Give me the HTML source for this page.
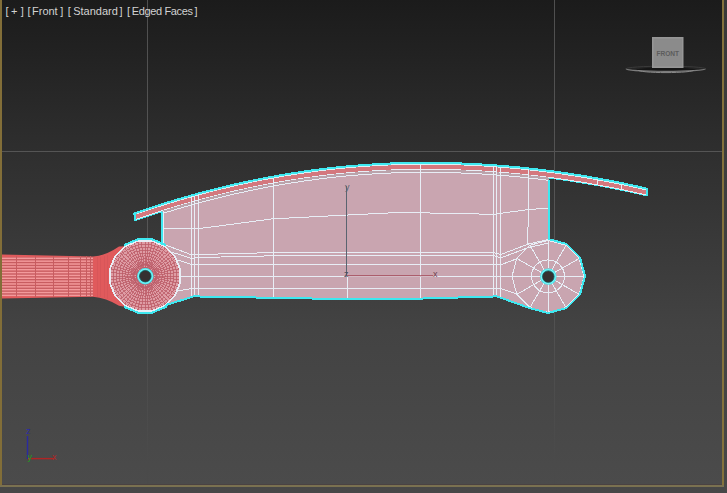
<!DOCTYPE html>
<html><head><meta charset="utf-8">
<style>
html,body{margin:0;padding:0;}
body{width:727px;height:493px;overflow:hidden;background:#3d3d3d;position:relative;font-family:"Liberation Sans",sans-serif;}
svg{position:absolute;left:0;top:0;}
.t{position:absolute;top:3.5px;color:#d2d2d2;font-size:11px;line-height:14px;white-space:pre;}
</style></head><body>
<svg width="727" height="493" viewBox="0 0 727 493">
<defs>
<linearGradient id="bg" x1="0" y1="0" x2="0" y2="1">
<stop offset="0" stop-color="#1b1b1b"/>
<stop offset="0.3" stop-color="#2e2e2e"/>
<stop offset="0.68" stop-color="#434343"/>
<stop offset="1" stop-color="#4b4b4b"/>
</linearGradient>
<linearGradient id="obg" x1="0" y1="0" x2="0" y2="1">
<stop offset="0" stop-color="#383838"/>
<stop offset="1" stop-color="#474747"/>
</linearGradient>
<linearGradient id="grid" x1="0" y1="0" x2="0" y2="1">
<stop offset="0" stop-color="#4f4f4f"/>
<stop offset="0.5" stop-color="#565656"/>
<stop offset="0.8" stop-color="#4d4d4d"/>
<stop offset="0.95" stop-color="#4a4a4a"/>
</linearGradient>
</defs>
<rect x="0" y="0" width="727" height="493" fill="url(#obg)"/>
<rect x="2" y="0" width="720" height="485" fill="url(#bg)"/>
<g shape-rendering="crispEdges">
<rect x="147" y="0" width="1" height="485" fill="url(#grid)"/>
<rect x="554" y="0" width="1" height="485" fill="url(#grid)"/>
<rect x="2" y="151" width="720" height="1" fill="#555555"/>
</g>
<g shape-rendering="crispEdges">
<path d="M2,254.4 L93,256.6 Q106,255.5 119,246.5 L132,246 L132,308 L119,305.8 Q106,297.6 93,296.7 L2,298.5 Z" fill="#e05a5c" shape-rendering="geometricPrecision"/>
<polygon points="2.00,256.50 93.00,257.50 93.00,296.00 2.00,296.50" fill="#c85c60"/>
<rect x="2" y="257.60" width="91" height="1.45" fill="#f39a9c" shape-rendering="geometricPrecision"/>
<rect x="2" y="260.45" width="91" height="1.45" fill="#f39a9c" shape-rendering="geometricPrecision"/>
<rect x="2" y="263.30" width="91" height="1.45" fill="#f39a9c" shape-rendering="geometricPrecision"/>
<rect x="2" y="266.15" width="91" height="1.45" fill="#f39a9c" shape-rendering="geometricPrecision"/>
<rect x="2" y="269.00" width="91" height="1.45" fill="#f39a9c" shape-rendering="geometricPrecision"/>
<rect x="2" y="271.85" width="91" height="1.45" fill="#f39a9c" shape-rendering="geometricPrecision"/>
<rect x="2" y="274.70" width="91" height="1.45" fill="#f39a9c" shape-rendering="geometricPrecision"/>
<rect x="2" y="277.55" width="91" height="1.45" fill="#f39a9c" shape-rendering="geometricPrecision"/>
<rect x="2" y="280.40" width="91" height="1.45" fill="#f39a9c" shape-rendering="geometricPrecision"/>
<rect x="2" y="283.25" width="91" height="1.45" fill="#f39a9c" shape-rendering="geometricPrecision"/>
<rect x="2" y="286.10" width="91" height="1.45" fill="#f39a9c" shape-rendering="geometricPrecision"/>
<rect x="2" y="288.95" width="91" height="1.45" fill="#f39a9c" shape-rendering="geometricPrecision"/>
<rect x="2" y="291.80" width="91" height="1.45" fill="#f39a9c" shape-rendering="geometricPrecision"/>
<rect x="2" y="294.65" width="91" height="1.45" fill="#f39a9c" shape-rendering="geometricPrecision"/>
<rect x="16" y="256" width="1" height="41" fill="#c85c60"/>
<rect x="35" y="256" width="1" height="41" fill="#c85c60"/>
<rect x="53" y="256" width="1" height="41" fill="#c85c60"/>
<rect x="67.5" y="256" width="1" height="41" fill="#c85c60"/>
<rect x="79.5" y="256" width="1" height="41" fill="#c85c60"/>
<rect x="85.5" y="256" width="1" height="41" fill="#c85c60"/>
<rect x="90" y="256" width="1" height="41" fill="#c85c60"/>
<rect x="96.5" y="257" width="1" height="39.5" fill="#cf5256" opacity="0.5"/>
<rect x="100" y="256.5" width="1" height="40.5" fill="#cf5256" opacity="0.5"/>
<rect x="103.5" y="256" width="1" height="41.5" fill="#cf5256" opacity="0.5"/>
<rect x="107" y="254.5" width="1" height="44.5" fill="#cf5256" opacity="0.5"/>
<polygon points="161.50,208.52 163.50,207.89 165.50,207.27 167.50,206.65 169.50,206.04 171.50,205.43 173.50,204.82 175.50,204.23 177.50,203.63 179.50,203.04 181.50,202.46 183.50,201.88 185.50,201.30 187.50,200.73 189.50,200.17 191.50,199.60 193.50,199.05 195.50,198.50 197.50,197.95 199.50,197.41 201.50,196.87 203.50,196.34 205.50,195.81 207.50,195.29 209.50,194.77 211.50,194.26 213.50,193.75 215.50,193.25 217.50,192.75 219.50,192.25 221.50,191.76 223.50,191.28 225.50,190.80 227.50,190.33 229.50,189.86 231.50,189.39 233.50,188.93 235.50,188.47 237.50,188.02 239.50,187.58 241.50,187.14 243.50,186.70 245.50,186.27 247.50,185.84 249.50,185.42 251.50,185.00 253.50,184.59 255.50,184.18 257.50,183.78 259.50,183.38 261.50,182.99 263.50,182.60 265.50,182.21 267.50,181.83 269.50,181.46 271.50,181.09 273.50,180.73 275.50,180.37 277.50,180.01 279.50,179.66 281.50,179.31 283.50,178.97 285.50,178.64 287.50,178.31 289.50,177.98 291.50,177.66 293.50,177.34 295.50,177.03 297.50,176.72 299.50,176.42 301.50,176.12 303.50,175.83 305.50,175.54 307.50,175.26 309.50,174.98 311.50,174.70 313.50,174.43 315.50,174.17 317.50,173.91 319.50,173.66 321.50,173.41 323.50,173.16 325.50,172.92 327.50,172.68 329.50,172.45 331.50,172.23 333.50,172.01 335.50,171.79 337.50,171.58 339.50,171.37 341.50,171.17 343.50,170.97 345.50,170.78 347.50,170.59 349.50,170.41 351.50,170.23 353.50,170.06 355.50,169.89 357.50,169.72 359.50,169.57 361.50,169.41 363.50,169.26 365.50,169.12 367.50,168.98 369.50,168.84 371.50,168.71 373.50,168.59 375.50,168.47 377.50,168.35 379.50,168.24 381.50,168.13 383.50,168.03 385.50,167.93 387.50,167.84 389.50,167.75 391.50,167.67 393.50,167.59 395.50,167.52 397.50,167.45 399.50,167.39 401.50,167.33 403.50,167.28 405.50,167.23 407.50,167.18 409.50,167.14 411.50,167.11 413.50,167.08 415.50,167.05 417.50,167.03 419.50,167.02 421.50,167.01 423.50,167.00 425.50,167.00 427.50,167.00 429.50,167.01 431.50,167.02 433.50,167.04 435.50,167.06 437.50,167.08 439.50,167.11 441.50,167.14 443.50,167.18 445.50,167.22 447.50,167.27 449.50,167.32 451.50,167.37 453.50,167.43 455.50,167.49 457.50,167.55 459.50,167.62 461.50,167.70 463.50,167.78 465.50,167.86 467.50,167.95 469.50,168.04 471.50,168.14 473.50,168.23 475.50,168.34 477.50,168.45 479.50,168.56 481.50,168.68 483.50,168.80 485.50,168.92 487.50,169.05 489.50,169.18 491.50,169.32 493.50,169.46 495.50,169.61 497.50,169.76 499.50,169.91 501.50,170.07 503.50,170.24 505.50,170.40 507.50,170.57 509.50,170.75 511.50,170.93 513.50,171.11 515.50,171.30 517.50,171.49 519.50,171.69 521.50,171.89 523.50,172.09 525.50,172.30 527.50,172.52 529.50,172.73 531.50,172.95 533.50,173.18 535.50,173.41 537.50,173.64 539.50,173.88 541.50,174.13 543.50,174.37 545.50,174.62 547.50,174.88 548.50,175.01 548.50,239.00 566.50,244.00 580.00,257.50 585.00,276.00 580.00,294.50 566.50,308.00 548.00,313.00 529.50,308.00 497.00,296.40 420.00,298.60 340.00,299.00 193.70,296.40 159.00,307.20 145.00,276.00 161.50,243.80" fill="#c9a5b0"/>
<polygon points="133.30,212.68 135.30,211.99 137.30,211.30 139.30,210.61 141.30,209.93 143.30,209.25 145.30,208.58 147.30,207.92 149.30,207.25 151.30,206.60 153.30,205.94 155.30,205.30 157.30,204.65 159.30,204.02 161.30,203.38 163.30,202.76 165.30,202.13 167.30,201.51 169.30,200.90 171.30,200.29 173.30,199.69 175.30,199.09 177.30,198.49 179.30,197.90 181.30,197.32 183.30,196.73 185.30,196.16 187.30,195.59 189.30,195.02 191.30,194.46 193.30,193.90 195.30,193.35 197.30,192.80 199.30,192.26 201.30,191.72 203.30,191.19 205.30,190.66 207.30,190.14 209.30,189.62 211.30,189.11 213.30,188.60 215.30,188.10 217.30,187.60 219.30,187.10 221.30,186.61 223.30,186.13 225.30,185.65 227.30,185.17 229.30,184.70 231.30,184.24 233.30,183.78 235.30,183.32 237.30,182.87 239.30,182.42 241.30,181.98 243.30,181.54 245.30,181.11 247.30,180.68 249.30,180.26 251.30,179.84 253.30,179.43 255.30,179.02 257.30,178.62 259.30,178.22 261.30,177.83 263.30,177.44 265.30,177.05 267.30,176.67 269.30,176.30 271.30,175.93 273.30,175.56 275.30,175.20 277.30,174.85 279.30,174.49 281.30,174.15 283.30,173.81 285.30,173.47 287.30,173.14 289.30,172.81 291.30,172.49 293.30,172.17 295.30,171.86 297.30,171.55 299.30,171.25 301.30,170.95 303.30,170.66 305.30,170.37 307.30,170.08 309.30,169.81 311.30,169.53 313.30,169.26 315.30,169.00 317.30,168.74 319.30,168.48 321.30,168.23 323.30,167.99 325.30,167.74 327.30,167.51 329.30,167.28 331.30,167.05 333.30,166.83 335.30,166.61 337.30,166.40 339.30,166.19 341.30,165.99 343.30,165.79 345.30,165.60 347.30,165.41 349.30,165.23 351.30,165.05 353.30,164.87 355.30,164.71 357.30,164.54 359.30,164.38 361.30,164.23 363.30,164.08 365.30,163.93 367.30,163.79 369.30,163.66 371.30,163.52 373.30,163.40 375.30,163.28 377.30,163.16 379.30,163.05 381.30,162.94 383.30,162.84 385.30,162.74 387.30,162.65 389.30,162.56 391.30,162.48 393.30,162.40 395.30,162.33 397.30,162.26 399.30,162.19 401.30,162.14 403.30,162.08 405.30,162.03 407.30,161.99 409.30,161.95 411.30,161.91 413.30,161.88 415.30,161.86 417.30,161.84 419.30,161.82 421.30,161.81 423.30,161.80 425.30,161.80 427.30,161.80 429.30,161.81 431.30,161.82 433.30,161.84 435.30,161.86 437.30,161.88 439.30,161.91 441.30,161.94 443.30,161.98 445.30,162.02 447.30,162.06 449.30,162.11 451.30,162.16 453.30,162.22 455.30,162.28 457.30,162.35 459.30,162.42 461.30,162.49 463.30,162.57 465.30,162.65 467.30,162.74 469.30,162.83 471.30,162.93 473.30,163.02 475.30,163.13 477.30,163.24 479.30,163.35 481.30,163.46 483.30,163.58 485.30,163.71 487.30,163.84 489.30,163.97 491.30,164.11 493.30,164.25 495.30,164.39 497.30,164.54 499.30,164.70 501.30,164.86 503.30,165.02 505.30,165.19 507.30,165.36 509.30,165.53 511.30,165.71 513.30,165.89 515.30,166.08 517.30,166.27 519.30,166.47 521.30,166.67 523.30,166.87 525.30,167.08 527.30,167.29 529.30,167.51 531.30,167.73 533.30,167.96 535.30,168.19 537.30,168.42 539.30,168.66 541.30,168.90 543.30,169.15 545.30,169.40 547.30,169.65 549.30,169.91 551.30,170.17 553.30,170.44 555.30,170.71 557.30,170.99 559.30,171.27 561.30,171.55 563.30,171.84 565.30,172.13 567.30,172.43 569.30,172.73 571.30,173.04 573.30,173.35 575.30,173.66 577.30,173.98 579.30,174.30 581.30,174.63 583.30,174.96 585.30,175.29 587.30,175.63 589.30,175.97 591.30,176.32 593.30,176.67 595.30,177.03 597.30,177.39 599.30,177.75 601.30,178.12 603.30,178.49 605.30,178.87 607.30,179.25 609.30,179.63 611.30,180.02 613.30,180.41 615.30,180.81 617.30,181.21 619.30,181.62 621.30,182.03 623.30,182.44 625.30,182.86 627.30,183.29 629.30,183.71 631.30,184.14 633.30,184.58 635.30,185.02 637.30,185.46 639.30,185.91 641.30,186.36 643.30,186.82 645.30,187.28 647.30,187.74 648.00,187.91 648.00,196.51 648.00,196.61 646.00,196.14 644.00,195.68 642.00,195.22 640.00,194.77 638.00,194.32 636.00,193.87 634.00,193.43 632.00,193.00 630.00,192.56 628.00,192.13 626.00,191.71 624.00,191.29 622.00,190.87 620.00,190.46 618.00,190.06 616.00,189.65 614.00,189.25 612.00,188.86 610.00,188.47 608.00,188.08 606.00,187.70 604.00,187.32 602.00,186.95 600.00,186.58 598.00,186.21 596.00,185.85 594.00,185.49 592.00,185.14 590.00,184.79 588.00,184.45 586.00,184.11 584.00,183.77 582.00,183.44 580.00,183.11 578.00,182.79 576.00,182.47 574.00,182.16 572.00,181.84 570.00,181.54 568.00,181.24 566.00,180.94 564.00,180.64 562.00,180.35 560.00,180.07 558.00,179.79 556.00,179.51 554.00,179.24 552.00,178.97 550.00,178.70 548.50,178.51 548.50,181.01 548.50,181.01 546.50,180.75 544.50,180.50 542.50,180.25 540.50,180.00 538.50,179.76 536.50,179.53 534.50,179.29 532.50,179.07 530.50,178.84 528.50,178.62 526.50,178.41 524.50,178.20 522.50,177.99 520.50,177.79 518.50,177.59 516.50,177.40 514.50,177.21 512.50,177.02 510.50,176.84 508.50,176.66 506.50,176.49 504.50,176.32 502.50,176.15 500.50,175.99 498.50,175.84 496.50,175.68 494.50,175.54 492.50,175.39 490.50,175.25 488.50,175.12 486.50,174.99 484.50,174.86 482.50,174.74 480.50,174.62 478.50,174.50 476.50,174.39 474.50,174.29 472.50,174.18 470.50,174.09 468.50,173.99 466.50,173.90 464.50,173.82 462.50,173.74 460.50,173.66 458.50,173.59 456.50,173.52 454.50,173.46 452.50,173.40 450.50,173.34 448.50,173.29 446.50,173.24 444.50,173.20 442.50,173.16 440.50,173.13 438.50,173.10 436.50,173.07 434.50,173.05 432.50,173.03 430.50,173.02 428.50,173.01 426.50,173.00 424.50,173.00 422.50,173.00 420.50,173.01 418.50,173.03 416.50,173.04 414.50,173.07 412.50,173.09 410.50,173.13 408.50,173.16 406.50,173.20 404.50,173.25 402.50,173.30 400.50,173.36 398.50,173.42 396.50,173.49 394.50,173.56 392.50,173.63 390.50,173.71 388.50,173.80 386.50,173.89 384.50,173.98 382.50,174.08 380.50,174.18 378.50,174.29 376.50,174.41 374.50,174.53 372.50,174.65 370.50,174.78 368.50,174.91 366.50,175.05 364.50,175.19 362.50,175.34 360.50,175.49 358.50,175.64 356.50,175.81 354.50,175.97 352.50,176.14 350.50,176.32 348.50,176.50 346.50,176.69 344.50,176.88 342.50,177.07 340.50,177.27 338.50,177.47 336.50,177.68 334.50,177.90 332.50,178.12 330.50,178.34 328.50,178.57 326.50,178.80 324.50,179.04 322.50,179.28 320.50,179.53 318.50,179.78 316.50,180.04 314.50,180.30 312.50,180.57 310.50,180.84 308.50,181.12 306.50,181.40 304.50,181.68 302.50,181.97 300.50,182.27 298.50,182.57 296.50,182.87 294.50,183.18 292.50,183.50 290.50,183.82 288.50,184.14 286.50,184.47 284.50,184.80 282.50,185.14 280.50,185.49 278.50,185.83 276.50,186.19 274.50,186.54 272.50,186.91 270.50,187.27 268.50,187.65 266.50,188.02 264.50,188.40 262.50,188.79 260.50,189.18 258.50,189.58 256.50,189.98 254.50,190.38 252.50,190.79 250.50,191.21 248.50,191.63 246.50,192.05 244.50,192.48 242.50,192.92 240.50,193.36 238.50,193.80 236.50,194.25 234.50,194.70 232.50,195.16 230.50,195.62 228.50,196.09 226.50,196.56 224.50,197.04 222.50,197.52 220.50,198.01 218.50,198.50 216.50,199.00 214.50,199.50 212.50,200.00 210.50,200.51 208.50,201.03 206.50,201.55 204.50,202.07 202.50,202.60 200.50,203.14 198.50,203.68 196.50,204.22 194.50,204.77 192.50,205.33 190.50,205.88 188.50,206.45 186.50,207.02 184.50,207.59 182.50,208.17 180.50,208.75 178.50,209.34 176.50,209.93 174.50,210.52 172.50,211.13 170.50,211.73 168.50,212.34 166.50,212.96 164.50,213.58 162.50,214.21 161.50,214.52 161.50,212.52 161.50,212.52 159.50,213.15 157.50,213.79 155.50,214.43 153.50,215.08 151.50,215.73 149.50,216.39 147.50,217.05 145.50,217.72 143.50,218.39 141.50,219.06 139.50,219.74 137.50,220.43 135.50,221.12 134.00,221.64" fill="#3ee8f0"/>
<polygon points="135.50,213.92 137.50,213.23 139.50,212.54 141.50,211.86 143.50,211.19 145.50,210.52 147.50,209.85 149.50,209.19 151.50,208.53 153.50,207.88 155.50,207.23 157.50,206.59 159.50,205.95 161.50,205.32 163.50,204.69 165.50,204.07 167.50,203.45 169.50,202.84 171.50,202.23 173.50,201.62 175.50,201.03 177.50,200.43 179.50,199.84 181.50,199.26 183.50,198.68 185.50,198.10 187.50,197.53 189.50,196.97 191.50,196.40 193.50,195.85 195.50,195.30 197.50,194.75 199.50,194.21 201.50,193.67 203.50,193.14 205.50,192.61 207.50,192.09 209.50,191.57 211.50,191.06 213.50,190.55 215.50,190.05 217.50,189.55 219.50,189.05 221.50,188.56 223.50,188.08 225.50,187.60 227.50,187.13 229.50,186.66 231.50,186.19 233.50,185.73 235.50,185.27 237.50,184.82 239.50,184.38 241.50,183.94 243.50,183.50 245.50,183.07 247.50,182.64 249.50,182.22 251.50,181.80 253.50,181.39 255.50,180.98 257.50,180.58 259.50,180.18 261.50,179.79 263.50,179.40 265.50,179.01 267.50,178.63 269.50,178.26 271.50,177.89 273.50,177.53 275.50,177.17 277.50,176.81 279.50,176.46 281.50,176.11 283.50,175.77 285.50,175.44 287.50,175.11 289.50,174.78 291.50,174.46 293.50,174.14 295.50,173.83 297.50,173.52 299.50,173.22 301.50,172.92 303.50,172.63 305.50,172.34 307.50,172.06 309.50,171.78 311.50,171.50 313.50,171.23 315.50,170.97 317.50,170.71 319.50,170.46 321.50,170.21 323.50,169.96 325.50,169.72 327.50,169.48 329.50,169.25 331.50,169.03 333.50,168.81 335.50,168.59 337.50,168.38 339.50,168.17 341.50,167.97 343.50,167.77 345.50,167.58 347.50,167.39 349.50,167.21 351.50,167.03 353.50,166.86 355.50,166.69 357.50,166.52 359.50,166.37 361.50,166.21 363.50,166.06 365.50,165.92 367.50,165.78 369.50,165.64 371.50,165.51 373.50,165.39 375.50,165.27 377.50,165.15 379.50,165.04 381.50,164.93 383.50,164.83 385.50,164.73 387.50,164.64 389.50,164.55 391.50,164.47 393.50,164.39 395.50,164.32 397.50,164.25 399.50,164.19 401.50,164.13 403.50,164.08 405.50,164.03 407.50,163.98 409.50,163.94 411.50,163.91 413.50,163.88 415.50,163.85 417.50,163.83 419.50,163.82 421.50,163.81 423.50,163.80 425.50,163.80 427.50,163.80 429.50,163.81 431.50,163.82 433.50,163.84 435.50,163.86 437.50,163.88 439.50,163.91 441.50,163.94 443.50,163.98 445.50,164.02 447.50,164.07 449.50,164.12 451.50,164.17 453.50,164.23 455.50,164.29 457.50,164.35 459.50,164.42 461.50,164.50 463.50,164.58 465.50,164.66 467.50,164.75 469.50,164.84 471.50,164.94 473.50,165.03 475.50,165.14 477.50,165.25 479.50,165.36 481.50,165.48 483.50,165.60 485.50,165.72 487.50,165.85 489.50,165.98 491.50,166.12 493.50,166.26 495.50,166.41 497.50,166.56 499.50,166.71 501.50,166.87 503.50,167.04 505.50,167.20 507.50,167.37 509.50,167.55 511.50,167.73 513.50,167.91 515.50,168.10 517.50,168.29 519.50,168.49 521.50,168.69 523.50,168.89 525.50,169.10 527.50,169.32 529.50,169.53 531.50,169.75 533.50,169.98 535.50,170.21 537.50,170.44 539.50,170.68 541.50,170.93 543.50,171.17 545.50,171.42 547.50,171.68 549.50,171.94 551.50,172.20 553.50,172.47 555.50,172.74 557.50,173.02 559.50,173.30 561.50,173.58 563.50,173.87 565.50,174.16 567.50,174.46 569.50,174.76 571.50,175.07 573.50,175.38 575.50,175.69 577.50,176.01 579.50,176.33 581.50,176.66 583.50,176.99 585.50,177.32 587.50,177.66 589.50,178.01 591.50,178.35 593.50,178.71 595.50,179.06 597.50,179.42 599.50,179.79 601.50,180.15 603.50,180.53 605.50,180.90 607.50,181.29 609.50,181.67 611.50,182.06 613.50,182.45 615.50,182.85 617.50,183.25 619.50,183.66 621.50,184.07 623.50,184.49 625.50,184.91 627.50,185.33 629.50,185.76 631.50,186.19 633.50,186.62 635.50,187.06 637.50,187.51 639.50,187.96 641.50,188.41 643.50,188.86 645.50,189.33 646.30,189.51 646.30,190.51 644.30,190.05 642.30,189.59 640.30,189.14 638.30,188.69 636.30,188.24 634.30,187.80 632.30,187.36 630.30,186.93 628.30,186.50 626.30,186.07 624.30,185.65 622.30,185.24 620.30,184.82 618.30,184.42 616.30,184.01 614.30,183.61 612.30,183.22 610.30,182.83 608.30,182.44 606.30,182.06 604.30,181.68 602.30,181.30 600.30,180.93 598.30,180.57 596.30,180.21 594.30,179.85 592.30,179.49 590.30,179.15 588.30,178.80 586.30,178.46 584.30,178.12 582.30,177.79 580.30,177.46 578.30,177.14 576.30,176.82 574.30,176.50 572.30,176.19 570.30,175.88 568.30,175.58 566.30,175.28 564.30,174.99 562.30,174.70 560.30,174.41 558.30,174.13 556.30,173.85 554.30,173.58 552.30,173.31 550.30,173.04 548.30,172.78 546.30,172.52 544.30,172.27 542.30,172.02 540.30,171.78 538.30,171.54 536.30,171.30 534.30,171.07 532.30,170.84 530.30,170.62 528.30,170.40 526.30,170.19 524.30,169.98 522.30,169.77 520.30,169.57 518.30,169.37 516.30,169.18 514.30,168.99 512.30,168.80 510.30,168.62 508.30,168.44 506.30,168.27 504.30,168.10 502.30,167.94 500.30,167.78 498.30,167.62 496.30,167.47 494.30,167.32 492.30,167.18 490.30,167.04 488.30,166.90 486.30,166.77 484.30,166.65 482.30,166.52 480.30,166.41 478.30,166.29 476.30,166.18 474.30,166.08 472.30,165.97 470.30,165.88 468.30,165.78 466.30,165.70 464.30,165.61 462.30,165.53 460.30,165.45 458.30,165.38 456.30,165.31 454.30,165.25 452.30,165.19 450.30,165.14 448.30,165.09 446.30,165.04 444.30,165.00 442.30,164.96 440.30,164.92 438.30,164.89 436.30,164.87 434.30,164.85 432.30,164.83 430.30,164.81 428.30,164.81 426.30,164.80 424.30,164.80 422.30,164.80 420.30,164.81 418.30,164.83 416.30,164.85 414.30,164.87 412.30,164.90 410.30,164.93 408.30,164.97 406.30,165.01 404.30,165.06 402.30,165.11 400.30,165.16 398.30,165.23 396.30,165.29 394.30,165.36 392.30,165.44 390.30,165.52 388.30,165.61 386.30,165.70 384.30,165.79 382.30,165.89 380.30,165.99 378.30,166.10 376.30,166.22 374.30,166.34 372.30,166.46 370.30,166.59 368.30,166.72 366.30,166.86 364.30,167.00 362.30,167.15 360.30,167.30 358.30,167.46 356.30,167.62 354.30,167.79 352.30,167.96 350.30,168.14 348.30,168.32 346.30,168.50 344.30,168.69 342.30,168.89 340.30,169.09 338.30,169.30 336.30,169.50 334.30,169.72 332.30,169.94 330.30,170.16 328.30,170.39 326.30,170.63 324.30,170.86 322.30,171.11 320.30,171.36 318.30,171.61 316.30,171.87 314.30,172.13 312.30,172.40 310.30,172.67 308.30,172.94 306.30,173.23 304.30,173.51 302.30,173.80 300.30,174.10 298.30,174.40 296.30,174.71 294.30,175.02 292.30,175.33 290.30,175.65 288.30,175.97 286.30,176.30 284.30,176.64 282.30,176.98 280.30,177.32 278.30,177.67 276.30,178.02 274.30,178.38 272.30,178.74 270.30,179.11 268.30,179.48 266.30,179.86 264.30,180.24 262.30,180.63 260.30,181.02 258.30,181.42 256.30,181.82 254.30,182.22 252.30,182.64 250.30,183.05 248.30,183.47 246.30,183.90 244.30,184.33 242.30,184.76 240.30,185.20 238.30,185.64 236.30,186.09 234.30,186.55 232.30,187.01 230.30,187.47 228.30,187.94 226.30,188.41 224.30,188.89 222.30,189.37 220.30,189.86 218.30,190.35 216.30,190.85 214.30,191.35 212.30,191.85 210.30,192.37 208.30,192.88 206.30,193.40 204.30,193.93 202.30,194.46 200.30,194.99 198.30,195.53 196.30,196.08 194.30,196.63 192.30,197.18 190.30,197.74 188.30,198.30 186.30,198.87 184.30,199.45 182.30,200.02 180.30,200.61 178.30,201.19 176.30,201.79 174.30,202.38 172.30,202.99 170.30,203.59 168.30,204.21 166.30,204.82 164.30,205.44 162.30,206.07 160.30,206.70 158.30,207.34 156.30,207.98 154.30,208.62 152.30,209.27 150.30,209.93 148.30,210.58 146.30,211.25 144.30,211.92 142.30,212.59 140.30,213.27 138.30,213.95 136.30,214.64 135.50,214.92" fill="#d8f4f8"/>
<polygon points="135.50,214.82 137.50,214.13 139.50,213.44 141.50,212.76 143.50,212.09 145.50,211.42 147.50,210.75 149.50,210.09 151.50,209.43 153.50,208.78 155.50,208.13 157.50,207.49 159.50,206.85 161.50,206.22 163.50,205.59 165.50,204.97 167.50,204.35 169.50,203.74 171.50,203.13 173.50,202.52 175.50,201.93 177.50,201.33 179.50,200.74 181.50,200.16 183.50,199.58 185.50,199.00 187.50,198.43 189.50,197.87 191.50,197.30 193.50,196.75 195.50,196.20 197.50,195.65 199.50,195.11 201.50,194.57 203.50,194.04 205.50,193.51 207.50,192.99 209.50,192.47 211.50,191.96 213.50,191.45 215.50,190.95 217.50,190.45 219.50,189.95 221.50,189.46 223.50,188.98 225.50,188.50 227.50,188.03 229.50,187.56 231.50,187.09 233.50,186.63 235.50,186.17 237.50,185.72 239.50,185.28 241.50,184.84 243.50,184.40 245.50,183.97 247.50,183.54 249.50,183.12 251.50,182.70 253.50,182.29 255.50,181.88 257.50,181.48 259.50,181.08 261.50,180.69 263.50,180.30 265.50,179.91 267.50,179.53 269.50,179.16 271.50,178.79 273.50,178.43 275.50,178.07 277.50,177.71 279.50,177.36 281.50,177.01 283.50,176.67 285.50,176.34 287.50,176.01 289.50,175.68 291.50,175.36 293.50,175.04 295.50,174.73 297.50,174.42 299.50,174.12 301.50,173.82 303.50,173.53 305.50,173.24 307.50,172.96 309.50,172.68 311.50,172.40 313.50,172.13 315.50,171.87 317.50,171.61 319.50,171.36 321.50,171.11 323.50,170.86 325.50,170.62 327.50,170.38 329.50,170.15 331.50,169.93 333.50,169.71 335.50,169.49 337.50,169.28 339.50,169.07 341.50,168.87 343.50,168.67 345.50,168.48 347.50,168.29 349.50,168.11 351.50,167.93 353.50,167.76 355.50,167.59 357.50,167.42 359.50,167.27 361.50,167.11 363.50,166.96 365.50,166.82 367.50,166.68 369.50,166.54 371.50,166.41 373.50,166.29 375.50,166.17 377.50,166.05 379.50,165.94 381.50,165.83 383.50,165.73 385.50,165.63 387.50,165.54 389.50,165.45 391.50,165.37 393.50,165.29 395.50,165.22 397.50,165.15 399.50,165.09 401.50,165.03 403.50,164.98 405.50,164.93 407.50,164.88 409.50,164.84 411.50,164.81 413.50,164.78 415.50,164.75 417.50,164.73 419.50,164.72 421.50,164.71 423.50,164.70 425.50,164.70 427.50,164.70 429.50,164.71 431.50,164.72 433.50,164.74 435.50,164.76 437.50,164.78 439.50,164.81 441.50,164.84 443.50,164.88 445.50,164.92 447.50,164.97 449.50,165.02 451.50,165.07 453.50,165.13 455.50,165.19 457.50,165.25 459.50,165.32 461.50,165.40 463.50,165.48 465.50,165.56 467.50,165.65 469.50,165.74 471.50,165.84 473.50,165.93 475.50,166.04 477.50,166.15 479.50,166.26 481.50,166.38 483.50,166.50 485.50,166.62 487.50,166.75 489.50,166.88 491.50,167.02 493.50,167.16 495.50,167.31 497.50,167.46 499.50,167.61 501.50,167.77 503.50,167.94 505.50,168.10 507.50,168.27 509.50,168.45 511.50,168.63 513.50,168.81 515.50,169.00 517.50,169.19 519.50,169.39 521.50,169.59 523.50,169.79 525.50,170.00 527.50,170.22 529.50,170.43 531.50,170.65 533.50,170.88 535.50,171.11 537.50,171.34 539.50,171.58 541.50,171.83 543.50,172.07 545.50,172.32 547.50,172.58 549.50,172.84 551.50,173.10 553.50,173.37 555.50,173.64 557.50,173.92 559.50,174.20 561.50,174.48 563.50,174.77 565.50,175.06 567.50,175.36 569.50,175.66 571.50,175.97 573.50,176.28 575.50,176.59 577.50,176.91 579.50,177.23 581.50,177.56 583.50,177.89 585.50,178.22 587.50,178.56 589.50,178.91 591.50,179.25 593.50,179.61 595.50,179.96 597.50,180.32 599.50,180.69 601.50,181.05 603.50,181.43 605.50,181.80 607.50,182.19 609.50,182.57 611.50,182.96 613.50,183.35 615.50,183.75 617.50,184.15 619.50,184.56 621.50,184.97 623.50,185.39 625.50,185.81 627.50,186.23 629.50,186.66 631.50,187.09 633.50,187.52 635.50,187.96 637.50,188.41 639.50,188.86 641.50,189.31 643.50,189.76 645.50,190.23 646.30,190.41 646.30,194.61 644.30,194.15 642.30,193.69 640.30,193.24 638.30,192.79 636.30,192.34 634.30,191.90 632.30,191.46 630.30,191.03 628.30,190.60 626.30,190.17 624.30,189.75 622.30,189.34 620.30,188.92 618.30,188.52 616.30,188.11 614.30,187.71 612.30,187.32 610.30,186.93 608.30,186.54 606.30,186.16 604.30,185.78 602.30,185.40 600.30,185.03 598.30,184.67 596.30,184.31 594.30,183.95 592.30,183.59 590.30,183.25 588.30,182.90 586.30,182.56 584.30,182.22 582.30,181.89 580.30,181.56 578.30,181.24 576.30,180.92 574.30,180.60 572.30,180.29 570.30,179.98 568.30,179.68 566.30,179.38 564.30,179.09 562.30,178.80 560.30,178.51 558.30,178.23 556.30,177.95 554.30,177.68 552.30,177.41 550.30,177.14 548.30,176.88 546.30,176.62 544.30,176.37 542.30,176.12 540.30,175.88 538.30,175.64 536.30,175.40 534.30,175.17 532.30,174.94 530.30,174.72 528.30,174.50 526.30,174.29 524.30,174.08 522.30,173.87 520.30,173.67 518.30,173.47 516.30,173.28 514.30,173.09 512.30,172.90 510.30,172.72 508.30,172.54 506.30,172.37 504.30,172.20 502.30,172.04 500.30,171.88 498.30,171.72 496.30,171.57 494.30,171.42 492.30,171.28 490.30,171.14 488.30,171.00 486.30,170.87 484.30,170.75 482.30,170.62 480.30,170.51 478.30,170.39 476.30,170.28 474.30,170.18 472.30,170.07 470.30,169.98 468.30,169.88 466.30,169.80 464.30,169.71 462.30,169.63 460.30,169.55 458.30,169.48 456.30,169.41 454.30,169.35 452.30,169.29 450.30,169.24 448.30,169.19 446.30,169.14 444.30,169.10 442.30,169.06 440.30,169.02 438.30,168.99 436.30,168.97 434.30,168.95 432.30,168.93 430.30,168.91 428.30,168.91 426.30,168.90 424.30,168.90 422.30,168.90 420.30,168.91 418.30,168.93 416.30,168.95 414.30,168.97 412.30,169.00 410.30,169.03 408.30,169.07 406.30,169.11 404.30,169.16 402.30,169.21 400.30,169.26 398.30,169.33 396.30,169.39 394.30,169.46 392.30,169.54 390.30,169.62 388.30,169.71 386.30,169.80 384.30,169.89 382.30,169.99 380.30,170.09 378.30,170.20 376.30,170.32 374.30,170.44 372.30,170.56 370.30,170.69 368.30,170.82 366.30,170.96 364.30,171.10 362.30,171.25 360.30,171.40 358.30,171.56 356.30,171.72 354.30,171.89 352.30,172.06 350.30,172.24 348.30,172.42 346.30,172.60 344.30,172.79 342.30,172.99 340.30,173.19 338.30,173.40 336.30,173.60 334.30,173.82 332.30,174.04 330.30,174.26 328.30,174.49 326.30,174.73 324.30,174.96 322.30,175.21 320.30,175.46 318.30,175.71 316.30,175.97 314.30,176.23 312.30,176.50 310.30,176.77 308.30,177.04 306.30,177.33 304.30,177.61 302.30,177.90 300.30,178.20 298.30,178.50 296.30,178.81 294.30,179.12 292.30,179.43 290.30,179.75 288.30,180.07 286.30,180.40 284.30,180.74 282.30,181.08 280.30,181.42 278.30,181.77 276.30,182.12 274.30,182.48 272.30,182.84 270.30,183.21 268.30,183.58 266.30,183.96 264.30,184.34 262.30,184.73 260.30,185.12 258.30,185.52 256.30,185.92 254.30,186.32 252.30,186.74 250.30,187.15 248.30,187.57 246.30,188.00 244.30,188.43 242.30,188.86 240.30,189.30 238.30,189.74 236.30,190.19 234.30,190.65 232.30,191.11 230.30,191.57 228.30,192.04 226.30,192.51 224.30,192.99 222.30,193.47 220.30,193.96 218.30,194.45 216.30,194.95 214.30,195.45 212.30,195.95 210.30,196.47 208.30,196.98 206.30,197.50 204.30,198.03 202.30,198.56 200.30,199.09 198.30,199.63 196.30,200.18 194.30,200.73 192.30,201.28 190.30,201.84 188.30,202.40 186.30,202.97 184.30,203.55 182.30,204.12 180.30,204.71 178.30,205.29 176.30,205.89 174.30,206.48 172.30,207.09 170.30,207.69 168.30,208.31 166.30,208.92 164.30,209.54 162.30,210.17 160.30,210.80 158.30,211.44 156.30,212.08 154.30,212.72 152.30,213.37 150.30,214.03 148.30,214.68 146.30,215.35 144.30,216.02 142.30,216.69 140.30,217.37 138.30,218.05 136.30,218.74 135.50,219.02" fill="#d4787e"/>
<polygon points="135.50,218.92 137.50,218.23 139.50,217.54 141.50,216.86 143.50,216.19 145.50,215.52 147.50,214.85 149.50,214.19 151.50,213.53 153.50,212.88 155.50,212.23 157.50,211.59 159.50,210.95 161.50,210.32 163.50,209.69 165.50,209.07 167.50,208.45 169.50,207.84 171.50,207.23 173.50,206.62 175.50,206.03 177.50,205.43 179.50,204.84 181.50,204.26 183.50,203.68 185.50,203.10 187.50,202.53 189.50,201.97 191.50,201.40 193.50,200.85 195.50,200.30 197.50,199.75 199.50,199.21 201.50,198.67 203.50,198.14 205.50,197.61 207.50,197.09 209.50,196.57 211.50,196.06 213.50,195.55 215.50,195.05 217.50,194.55 219.50,194.05 221.50,193.56 223.50,193.08 225.50,192.60 227.50,192.13 229.50,191.66 231.50,191.19 233.50,190.73 235.50,190.27 237.50,189.82 239.50,189.38 241.50,188.94 243.50,188.50 245.50,188.07 247.50,187.64 249.50,187.22 251.50,186.80 253.50,186.39 255.50,185.98 257.50,185.58 259.50,185.18 261.50,184.79 263.50,184.40 265.50,184.01 267.50,183.63 269.50,183.26 271.50,182.89 273.50,182.53 275.50,182.17 277.50,181.81 279.50,181.46 281.50,181.11 283.50,180.77 285.50,180.44 287.50,180.11 289.50,179.78 291.50,179.46 293.50,179.14 295.50,178.83 297.50,178.52 299.50,178.22 301.50,177.92 303.50,177.63 305.50,177.34 307.50,177.06 309.50,176.78 311.50,176.50 313.50,176.23 315.50,175.97 317.50,175.71 319.50,175.46 321.50,175.21 323.50,174.96 325.50,174.72 327.50,174.48 329.50,174.25 331.50,174.03 333.50,173.81 335.50,173.59 337.50,173.38 339.50,173.17 341.50,172.97 343.50,172.77 345.50,172.58 347.50,172.39 349.50,172.21 351.50,172.03 353.50,171.86 355.50,171.69 357.50,171.52 359.50,171.37 361.50,171.21 363.50,171.06 365.50,170.92 367.50,170.78 369.50,170.64 371.50,170.51 373.50,170.39 375.50,170.27 377.50,170.15 379.50,170.04 381.50,169.93 383.50,169.83 385.50,169.73 387.50,169.64 389.50,169.55 391.50,169.47 393.50,169.39 395.50,169.32 397.50,169.25 399.50,169.19 401.50,169.13 403.50,169.08 405.50,169.03 407.50,168.98 409.50,168.94 411.50,168.91 413.50,168.88 415.50,168.85 417.50,168.83 419.50,168.82 421.50,168.81 423.50,168.80 425.50,168.80 427.50,168.80 429.50,168.81 431.50,168.82 433.50,168.84 435.50,168.86 437.50,168.88 439.50,168.91 441.50,168.94 443.50,168.98 445.50,169.02 447.50,169.07 449.50,169.12 451.50,169.17 453.50,169.23 455.50,169.29 457.50,169.35 459.50,169.42 461.50,169.50 463.50,169.58 465.50,169.66 467.50,169.75 469.50,169.84 471.50,169.94 473.50,170.03 475.50,170.14 477.50,170.25 479.50,170.36 481.50,170.48 483.50,170.60 485.50,170.72 487.50,170.85 489.50,170.98 491.50,171.12 493.50,171.26 495.50,171.41 497.50,171.56 499.50,171.71 501.50,171.87 503.50,172.04 505.50,172.20 507.50,172.37 509.50,172.55 511.50,172.73 513.50,172.91 515.50,173.10 517.50,173.29 519.50,173.49 521.50,173.69 523.50,173.89 525.50,174.10 527.50,174.32 529.50,174.53 531.50,174.75 533.50,174.98 535.50,175.21 537.50,175.44 539.50,175.68 541.50,175.93 543.50,176.17 545.50,176.42 547.50,176.68 549.50,176.94 551.50,177.20 553.50,177.47 555.50,177.74 557.50,178.02 559.50,178.30 561.50,178.58 563.50,178.87 565.50,179.16 567.50,179.46 569.50,179.76 571.50,180.07 573.50,180.38 575.50,180.69 577.50,181.01 579.50,181.33 581.50,181.66 583.50,181.99 585.50,182.32 587.50,182.66 589.50,183.01 591.50,183.35 593.50,183.71 595.50,184.06 597.50,184.42 599.50,184.79 601.50,185.15 603.50,185.53 605.50,185.90 607.50,186.29 609.50,186.67 611.50,187.06 613.50,187.45 615.50,187.85 617.50,188.25 619.50,188.66 621.50,189.07 623.50,189.49 625.50,189.91 627.50,190.33 629.50,190.76 631.50,191.19 633.50,191.62 635.50,192.06 637.50,192.51 639.50,192.96 641.50,193.41 643.50,193.86 645.50,194.33 646.30,194.51 646.30,195.51 644.30,195.05 642.30,194.59 640.30,194.14 638.30,193.69 636.30,193.24 634.30,192.80 632.30,192.36 630.30,191.93 628.30,191.50 626.30,191.07 624.30,190.65 622.30,190.24 620.30,189.82 618.30,189.42 616.30,189.01 614.30,188.61 612.30,188.22 610.30,187.83 608.30,187.44 606.30,187.06 604.30,186.68 602.30,186.30 600.30,185.93 598.30,185.57 596.30,185.21 594.30,184.85 592.30,184.49 590.30,184.15 588.30,183.80 586.30,183.46 584.30,183.12 582.30,182.79 580.30,182.46 578.30,182.14 576.30,181.82 574.30,181.50 572.30,181.19 570.30,180.88 568.30,180.58 566.30,180.28 564.30,179.99 562.30,179.70 560.30,179.41 558.30,179.13 556.30,178.85 554.30,178.58 552.30,178.31 550.30,178.04 548.30,177.78 546.30,177.52 544.30,177.27 542.30,177.02 540.30,176.78 538.30,176.54 536.30,176.30 534.30,176.07 532.30,175.84 530.30,175.62 528.30,175.40 526.30,175.19 524.30,174.98 522.30,174.77 520.30,174.57 518.30,174.37 516.30,174.18 514.30,173.99 512.30,173.80 510.30,173.62 508.30,173.44 506.30,173.27 504.30,173.10 502.30,172.94 500.30,172.78 498.30,172.62 496.30,172.47 494.30,172.32 492.30,172.18 490.30,172.04 488.30,171.90 486.30,171.77 484.30,171.65 482.30,171.52 480.30,171.41 478.30,171.29 476.30,171.18 474.30,171.08 472.30,170.97 470.30,170.88 468.30,170.78 466.30,170.70 464.30,170.61 462.30,170.53 460.30,170.45 458.30,170.38 456.30,170.31 454.30,170.25 452.30,170.19 450.30,170.14 448.30,170.09 446.30,170.04 444.30,170.00 442.30,169.96 440.30,169.92 438.30,169.89 436.30,169.87 434.30,169.85 432.30,169.83 430.30,169.81 428.30,169.81 426.30,169.80 424.30,169.80 422.30,169.80 420.30,169.81 418.30,169.83 416.30,169.85 414.30,169.87 412.30,169.90 410.30,169.93 408.30,169.97 406.30,170.01 404.30,170.06 402.30,170.11 400.30,170.16 398.30,170.23 396.30,170.29 394.30,170.36 392.30,170.44 390.30,170.52 388.30,170.61 386.30,170.70 384.30,170.79 382.30,170.89 380.30,170.99 378.30,171.10 376.30,171.22 374.30,171.34 372.30,171.46 370.30,171.59 368.30,171.72 366.30,171.86 364.30,172.00 362.30,172.15 360.30,172.30 358.30,172.46 356.30,172.62 354.30,172.79 352.30,172.96 350.30,173.14 348.30,173.32 346.30,173.50 344.30,173.69 342.30,173.89 340.30,174.09 338.30,174.30 336.30,174.50 334.30,174.72 332.30,174.94 330.30,175.16 328.30,175.39 326.30,175.63 324.30,175.86 322.30,176.11 320.30,176.36 318.30,176.61 316.30,176.87 314.30,177.13 312.30,177.40 310.30,177.67 308.30,177.94 306.30,178.23 304.30,178.51 302.30,178.80 300.30,179.10 298.30,179.40 296.30,179.71 294.30,180.02 292.30,180.33 290.30,180.65 288.30,180.97 286.30,181.30 284.30,181.64 282.30,181.98 280.30,182.32 278.30,182.67 276.30,183.02 274.30,183.38 272.30,183.74 270.30,184.11 268.30,184.48 266.30,184.86 264.30,185.24 262.30,185.63 260.30,186.02 258.30,186.42 256.30,186.82 254.30,187.22 252.30,187.64 250.30,188.05 248.30,188.47 246.30,188.90 244.30,189.33 242.30,189.76 240.30,190.20 238.30,190.64 236.30,191.09 234.30,191.55 232.30,192.01 230.30,192.47 228.30,192.94 226.30,193.41 224.30,193.89 222.30,194.37 220.30,194.86 218.30,195.35 216.30,195.85 214.30,196.35 212.30,196.85 210.30,197.37 208.30,197.88 206.30,198.40 204.30,198.93 202.30,199.46 200.30,199.99 198.30,200.53 196.30,201.08 194.30,201.63 192.30,202.18 190.30,202.74 188.30,203.30 186.30,203.87 184.30,204.45 182.30,205.02 180.30,205.61 178.30,206.19 176.30,206.79 174.30,207.38 172.30,207.99 170.30,208.59 168.30,209.21 166.30,209.82 164.30,210.44 162.30,211.07 160.30,211.70 158.30,212.34 156.30,212.98 154.30,213.62 152.30,214.27 150.30,214.93 148.30,215.58 146.30,216.25 144.30,216.92 142.30,217.59 140.30,218.27 138.30,218.95 136.30,219.64 135.50,219.92" fill="#e8eef6"/>
<polygon points="161.50,211.12 163.50,210.49 165.50,209.87 167.50,209.25 169.50,208.64 171.50,208.03 173.50,207.42 175.50,206.83 177.50,206.23 179.50,205.64 181.50,205.06 183.50,204.48 185.50,203.90 187.50,203.33 189.50,202.77 191.50,202.20 193.50,201.65 195.50,201.10 197.50,200.55 199.50,200.01 201.50,199.47 203.50,198.94 205.50,198.41 207.50,197.89 209.50,197.37 211.50,196.86 213.50,196.35 215.50,195.85 217.50,195.35 219.50,194.85 221.50,194.36 223.50,193.88 225.50,193.40 227.50,192.93 229.50,192.46 231.50,191.99 233.50,191.53 235.50,191.07 237.50,190.62 239.50,190.18 241.50,189.74 243.50,189.30 245.50,188.87 247.50,188.44 249.50,188.02 251.50,187.60 253.50,187.19 255.50,186.78 257.50,186.38 259.50,185.98 261.50,185.59 263.50,185.20 265.50,184.81 267.50,184.43 269.50,184.06 271.50,183.69 273.50,183.33 275.50,182.97 277.50,182.61 279.50,182.26 281.50,181.91 283.50,181.57 285.50,181.24 287.50,180.91 289.50,180.58 291.50,180.26 293.50,179.94 295.50,179.63 297.50,179.32 299.50,179.02 301.50,178.72 303.50,178.43 305.50,178.14 307.50,177.86 309.50,177.58 311.50,177.30 313.50,177.03 315.50,176.77 317.50,176.51 319.50,176.26 321.50,176.01 323.50,175.76 325.50,175.52 327.50,175.28 329.50,175.05 331.50,174.83 333.50,174.61 335.50,174.39 337.50,174.18 339.50,173.97 341.50,173.77 343.50,173.57 345.50,173.38 347.50,173.19 349.50,173.01 351.50,172.83 353.50,172.66 355.50,172.49 357.50,172.32 359.50,172.17 361.50,172.01 363.50,171.86 365.50,171.72 367.50,171.58 369.50,171.44 371.50,171.31 373.50,171.19 375.50,171.07 377.50,170.95 379.50,170.84 381.50,170.73 383.50,170.63 385.50,170.53 387.50,170.44 389.50,170.35 391.50,170.27 393.50,170.19 395.50,170.12 397.50,170.05 399.50,169.99 401.50,169.93 403.50,169.88 405.50,169.83 407.50,169.78 409.50,169.74 411.50,169.71 413.50,169.68 415.50,169.65 417.50,169.63 419.50,169.62 421.50,169.61 423.50,169.60 425.50,169.60 427.50,169.60 429.50,169.61 431.50,169.62 433.50,169.64 435.50,169.66 437.50,169.68 439.50,169.71 441.50,169.74 443.50,169.78 445.50,169.82 447.50,169.87 449.50,169.92 451.50,169.97 453.50,170.03 455.50,170.09 457.50,170.15 459.50,170.22 461.50,170.30 463.50,170.38 465.50,170.46 467.50,170.55 469.50,170.64 471.50,170.74 473.50,170.83 475.50,170.94 477.50,171.05 479.50,171.16 481.50,171.28 483.50,171.40 485.50,171.52 487.50,171.65 489.50,171.78 491.50,171.92 493.50,172.06 495.50,172.21 497.50,172.36 499.50,172.51 501.50,172.67 503.50,172.84 505.50,173.00 507.50,173.17 509.50,173.35 511.50,173.53 513.50,173.71 515.50,173.90 517.50,174.09 519.50,174.29 521.50,174.49 523.50,174.69 525.50,174.90 527.50,175.12 529.50,175.33 531.50,175.55 533.50,175.78 535.50,176.01 537.50,176.24 539.50,176.48 541.50,176.73 543.50,176.97 545.50,177.22 547.50,177.48 548.50,177.61 548.50,179.91 546.50,179.65 544.50,179.40 542.50,179.15 540.50,178.90 538.50,178.66 536.50,178.43 534.50,178.19 532.50,177.97 530.50,177.74 528.50,177.52 526.50,177.31 524.50,177.10 522.50,176.89 520.50,176.69 518.50,176.49 516.50,176.30 514.50,176.11 512.50,175.92 510.50,175.74 508.50,175.56 506.50,175.39 504.50,175.22 502.50,175.05 500.50,174.89 498.50,174.74 496.50,174.58 494.50,174.44 492.50,174.29 490.50,174.15 488.50,174.02 486.50,173.89 484.50,173.76 482.50,173.64 480.50,173.52 478.50,173.40 476.50,173.29 474.50,173.19 472.50,173.08 470.50,172.99 468.50,172.89 466.50,172.80 464.50,172.72 462.50,172.64 460.50,172.56 458.50,172.49 456.50,172.42 454.50,172.36 452.50,172.30 450.50,172.24 448.50,172.19 446.50,172.14 444.50,172.10 442.50,172.06 440.50,172.03 438.50,172.00 436.50,171.97 434.50,171.95 432.50,171.93 430.50,171.92 428.50,171.91 426.50,171.90 424.50,171.90 422.50,171.90 420.50,171.91 418.50,171.93 416.50,171.94 414.50,171.97 412.50,171.99 410.50,172.03 408.50,172.06 406.50,172.10 404.50,172.15 402.50,172.20 400.50,172.26 398.50,172.32 396.50,172.39 394.50,172.46 392.50,172.53 390.50,172.61 388.50,172.70 386.50,172.79 384.50,172.88 382.50,172.98 380.50,173.08 378.50,173.19 376.50,173.31 374.50,173.43 372.50,173.55 370.50,173.68 368.50,173.81 366.50,173.95 364.50,174.09 362.50,174.24 360.50,174.39 358.50,174.54 356.50,174.71 354.50,174.87 352.50,175.04 350.50,175.22 348.50,175.40 346.50,175.59 344.50,175.78 342.50,175.97 340.50,176.17 338.50,176.37 336.50,176.58 334.50,176.80 332.50,177.02 330.50,177.24 328.50,177.47 326.50,177.70 324.50,177.94 322.50,178.18 320.50,178.43 318.50,178.68 316.50,178.94 314.50,179.20 312.50,179.47 310.50,179.74 308.50,180.02 306.50,180.30 304.50,180.58 302.50,180.87 300.50,181.17 298.50,181.47 296.50,181.77 294.50,182.08 292.50,182.40 290.50,182.72 288.50,183.04 286.50,183.37 284.50,183.70 282.50,184.04 280.50,184.39 278.50,184.73 276.50,185.09 274.50,185.44 272.50,185.81 270.50,186.17 268.50,186.55 266.50,186.92 264.50,187.30 262.50,187.69 260.50,188.08 258.50,188.48 256.50,188.88 254.50,189.28 252.50,189.69 250.50,190.11 248.50,190.53 246.50,190.95 244.50,191.38 242.50,191.82 240.50,192.26 238.50,192.70 236.50,193.15 234.50,193.60 232.50,194.06 230.50,194.52 228.50,194.99 226.50,195.46 224.50,195.94 222.50,196.42 220.50,196.91 218.50,197.40 216.50,197.90 214.50,198.40 212.50,198.90 210.50,199.41 208.50,199.93 206.50,200.45 204.50,200.97 202.50,201.50 200.50,202.04 198.50,202.58 196.50,203.12 194.50,203.67 192.50,204.23 190.50,204.78 188.50,205.35 186.50,205.92 184.50,206.49 182.50,207.07 180.50,207.65 178.50,208.24 176.50,208.83 174.50,209.42 172.50,210.03 170.50,210.63 168.50,211.24 166.50,211.86 164.50,212.48 162.50,213.11 161.50,213.42" fill="#bba3ab"/>
<polygon points="161.50,213.32 163.50,212.69 165.50,212.07 167.50,211.45 169.50,210.84 171.50,210.23 173.50,209.62 175.50,209.03 177.50,208.43 179.50,207.84 181.50,207.26 183.50,206.68 185.50,206.10 187.50,205.53 189.50,204.97 191.50,204.40 193.50,203.85 195.50,203.30 197.50,202.75 199.50,202.21 201.50,201.67 203.50,201.14 205.50,200.61 207.50,200.09 209.50,199.57 211.50,199.06 213.50,198.55 215.50,198.05 217.50,197.55 219.50,197.05 221.50,196.56 223.50,196.08 225.50,195.60 227.50,195.13 229.50,194.66 231.50,194.19 233.50,193.73 235.50,193.27 237.50,192.82 239.50,192.38 241.50,191.94 243.50,191.50 245.50,191.07 247.50,190.64 249.50,190.22 251.50,189.80 253.50,189.39 255.50,188.98 257.50,188.58 259.50,188.18 261.50,187.79 263.50,187.40 265.50,187.01 267.50,186.63 269.50,186.26 271.50,185.89 273.50,185.53 275.50,185.17 277.50,184.81 279.50,184.46 281.50,184.11 283.50,183.77 285.50,183.44 287.50,183.11 289.50,182.78 291.50,182.46 293.50,182.14 295.50,181.83 297.50,181.52 299.50,181.22 301.50,180.92 303.50,180.63 305.50,180.34 307.50,180.06 309.50,179.78 311.50,179.50 313.50,179.23 315.50,178.97 317.50,178.71 319.50,178.46 321.50,178.21 323.50,177.96 325.50,177.72 327.50,177.48 329.50,177.25 331.50,177.03 333.50,176.81 335.50,176.59 337.50,176.38 339.50,176.17 341.50,175.97 343.50,175.77 345.50,175.58 347.50,175.39 349.50,175.21 351.50,175.03 353.50,174.86 355.50,174.69 357.50,174.52 359.50,174.37 361.50,174.21 363.50,174.06 365.50,173.92 367.50,173.78 369.50,173.64 371.50,173.51 373.50,173.39 375.50,173.27 377.50,173.15 379.50,173.04 381.50,172.93 383.50,172.83 385.50,172.73 387.50,172.64 389.50,172.55 391.50,172.47 393.50,172.39 395.50,172.32 397.50,172.25 399.50,172.19 401.50,172.13 403.50,172.08 405.50,172.03 407.50,171.98 409.50,171.94 411.50,171.91 413.50,171.88 415.50,171.85 417.50,171.83 419.50,171.82 421.50,171.81 423.50,171.80 425.50,171.80 427.50,171.80 429.50,171.81 431.50,171.82 433.50,171.84 435.50,171.86 437.50,171.88 439.50,171.91 441.50,171.94 443.50,171.98 445.50,172.02 447.50,172.07 449.50,172.12 451.50,172.17 453.50,172.23 455.50,172.29 457.50,172.35 459.50,172.42 461.50,172.50 463.50,172.58 465.50,172.66 467.50,172.75 469.50,172.84 471.50,172.94 473.50,173.03 475.50,173.14 477.50,173.25 479.50,173.36 481.50,173.48 483.50,173.60 485.50,173.72 487.50,173.85 489.50,173.98 491.50,174.12 493.50,174.26 495.50,174.41 497.50,174.56 499.50,174.71 501.50,174.87 503.50,175.04 505.50,175.20 507.50,175.37 509.50,175.55 511.50,175.73 513.50,175.91 515.50,176.10 517.50,176.29 519.50,176.49 521.50,176.69 523.50,176.89 525.50,177.10 527.50,177.32 529.50,177.53 531.50,177.75 533.50,177.98 535.50,178.21 537.50,178.44 539.50,178.68 541.50,178.93 543.50,179.17 545.50,179.42 547.50,179.68 548.50,179.81 548.50,180.91 546.50,180.65 544.50,180.40 542.50,180.15 540.50,179.90 538.50,179.66 536.50,179.43 534.50,179.19 532.50,178.97 530.50,178.74 528.50,178.52 526.50,178.31 524.50,178.10 522.50,177.89 520.50,177.69 518.50,177.49 516.50,177.30 514.50,177.11 512.50,176.92 510.50,176.74 508.50,176.56 506.50,176.39 504.50,176.22 502.50,176.05 500.50,175.89 498.50,175.74 496.50,175.58 494.50,175.44 492.50,175.29 490.50,175.15 488.50,175.02 486.50,174.89 484.50,174.76 482.50,174.64 480.50,174.52 478.50,174.40 476.50,174.29 474.50,174.19 472.50,174.08 470.50,173.99 468.50,173.89 466.50,173.80 464.50,173.72 462.50,173.64 460.50,173.56 458.50,173.49 456.50,173.42 454.50,173.36 452.50,173.30 450.50,173.24 448.50,173.19 446.50,173.14 444.50,173.10 442.50,173.06 440.50,173.03 438.50,173.00 436.50,172.97 434.50,172.95 432.50,172.93 430.50,172.92 428.50,172.91 426.50,172.90 424.50,172.90 422.50,172.90 420.50,172.91 418.50,172.93 416.50,172.94 414.50,172.97 412.50,172.99 410.50,173.03 408.50,173.06 406.50,173.10 404.50,173.15 402.50,173.20 400.50,173.26 398.50,173.32 396.50,173.39 394.50,173.46 392.50,173.53 390.50,173.61 388.50,173.70 386.50,173.79 384.50,173.88 382.50,173.98 380.50,174.08 378.50,174.19 376.50,174.31 374.50,174.43 372.50,174.55 370.50,174.68 368.50,174.81 366.50,174.95 364.50,175.09 362.50,175.24 360.50,175.39 358.50,175.54 356.50,175.71 354.50,175.87 352.50,176.04 350.50,176.22 348.50,176.40 346.50,176.59 344.50,176.78 342.50,176.97 340.50,177.17 338.50,177.37 336.50,177.58 334.50,177.80 332.50,178.02 330.50,178.24 328.50,178.47 326.50,178.70 324.50,178.94 322.50,179.18 320.50,179.43 318.50,179.68 316.50,179.94 314.50,180.20 312.50,180.47 310.50,180.74 308.50,181.02 306.50,181.30 304.50,181.58 302.50,181.87 300.50,182.17 298.50,182.47 296.50,182.77 294.50,183.08 292.50,183.40 290.50,183.72 288.50,184.04 286.50,184.37 284.50,184.70 282.50,185.04 280.50,185.39 278.50,185.73 276.50,186.09 274.50,186.44 272.50,186.81 270.50,187.17 268.50,187.55 266.50,187.92 264.50,188.30 262.50,188.69 260.50,189.08 258.50,189.48 256.50,189.88 254.50,190.28 252.50,190.69 250.50,191.11 248.50,191.53 246.50,191.95 244.50,192.38 242.50,192.82 240.50,193.26 238.50,193.70 236.50,194.15 234.50,194.60 232.50,195.06 230.50,195.52 228.50,195.99 226.50,196.46 224.50,196.94 222.50,197.42 220.50,197.91 218.50,198.40 216.50,198.90 214.50,199.40 212.50,199.90 210.50,200.41 208.50,200.93 206.50,201.45 204.50,201.97 202.50,202.50 200.50,203.04 198.50,203.58 196.50,204.12 194.50,204.67 192.50,205.23 190.50,205.78 188.50,206.35 186.50,206.92 184.50,207.49 182.50,208.07 180.50,208.65 178.50,209.24 176.50,209.83 174.50,210.42 172.50,211.03 170.50,211.63 168.50,212.24 166.50,212.86 164.50,213.48 162.50,214.11 161.50,214.42" fill="#e8eef6"/>
<polygon points="161.50,214.32 163.50,213.69 165.50,213.07 167.50,212.45 169.50,211.84 171.50,211.23 173.50,210.62 175.50,210.03 177.50,209.43 179.50,208.84 181.50,208.26 183.50,207.68 185.50,207.10 187.50,206.53 189.50,205.97 191.50,205.40 193.50,204.85 195.50,204.30 197.50,203.75 199.50,203.21 201.50,202.67 203.50,202.14 205.50,201.61 207.50,201.09 209.50,200.57 211.50,200.06 213.50,199.55 215.50,199.05 217.50,198.55 219.50,198.05 221.50,197.56 223.50,197.08 225.50,196.60 227.50,196.13 229.50,195.66 231.50,195.19 233.50,194.73 235.50,194.27 237.50,193.82 239.50,193.38 241.50,192.94 243.50,192.50 245.50,192.07 247.50,191.64 249.50,191.22 251.50,190.80 253.50,190.39 255.50,189.98 257.50,189.58 259.50,189.18 261.50,188.79 263.50,188.40 265.50,188.01 267.50,187.63 269.50,187.26 271.50,186.89 273.50,186.53 275.50,186.17 277.50,185.81 279.50,185.46 281.50,185.11 283.50,184.77 285.50,184.44 287.50,184.11 289.50,183.78 291.50,183.46 293.50,183.14 295.50,182.83 297.50,182.52 299.50,182.22 301.50,181.92 303.50,181.63 305.50,181.34 307.50,181.06 309.50,180.78 311.50,180.50 313.50,180.23 315.50,179.97 317.50,179.71 319.50,179.46 321.50,179.21 323.50,178.96 325.50,178.72 327.50,178.48 329.50,178.25 331.50,178.03 333.50,177.81 335.50,177.59 337.50,177.38 339.50,177.17 341.50,176.97 343.50,176.77 345.50,176.58 347.50,176.39 349.50,176.21 351.50,176.03 353.50,175.86 355.50,175.69 357.50,175.52 359.50,175.37 361.50,175.21 363.50,175.06 365.50,174.92 367.50,174.78 369.50,174.64 371.50,174.51 373.50,174.39 375.50,174.27 377.50,174.15 379.50,174.04 381.50,173.93 383.50,173.83 385.50,173.73 387.50,173.64 389.50,173.55 391.50,173.47 393.50,173.39 395.50,173.32 397.50,173.25 399.50,173.19 401.50,173.13 403.50,173.08 405.50,173.03 407.50,172.98 409.50,172.94 411.50,172.91 413.50,172.88 415.50,172.85 417.50,172.83 419.50,172.82 421.50,172.81 423.50,172.80 425.50,172.80 427.50,172.80 429.50,172.81 431.50,172.82 433.50,172.84 435.50,172.86 437.50,172.88 439.50,172.91 441.50,172.94 443.50,172.98 445.50,173.02 447.50,173.07 449.50,173.12 451.50,173.17 453.50,173.23 455.50,173.29 457.50,173.35 459.50,173.42 461.50,173.50 463.50,173.58 465.50,173.66 467.50,173.75 469.50,173.84 471.50,173.94 473.50,174.03 475.50,174.14 477.50,174.25 479.50,174.36 481.50,174.48 483.50,174.60 485.50,174.72 487.50,174.85 489.50,174.98 491.50,175.12 493.50,175.26 495.50,175.41 497.50,175.56 499.50,175.71 501.50,175.87 503.50,176.04 505.50,176.20 507.50,176.37 509.50,176.55 511.50,176.73 513.50,176.91 515.50,177.10 517.50,177.29 519.50,177.49 521.50,177.69 523.50,177.89 525.50,178.10 527.50,178.32 529.50,178.53 531.50,178.75 533.50,178.98 535.50,179.21 537.50,179.44 539.50,179.68 541.50,179.93 543.50,180.17 545.50,180.42 547.50,180.68 548.50,180.81 548.50,182.51 546.50,182.25 544.50,182.00 542.50,181.75 540.50,181.50 538.50,181.26 536.50,181.03 534.50,180.79 532.50,180.57 530.50,180.34 528.50,180.12 526.50,179.91 524.50,179.70 522.50,179.49 520.50,179.29 518.50,179.09 516.50,178.90 514.50,178.71 512.50,178.52 510.50,178.34 508.50,178.16 506.50,177.99 504.50,177.82 502.50,177.65 500.50,177.49 498.50,177.34 496.50,177.18 494.50,177.04 492.50,176.89 490.50,176.75 488.50,176.62 486.50,176.49 484.50,176.36 482.50,176.24 480.50,176.12 478.50,176.00 476.50,175.89 474.50,175.79 472.50,175.68 470.50,175.59 468.50,175.49 466.50,175.40 464.50,175.32 462.50,175.24 460.50,175.16 458.50,175.09 456.50,175.02 454.50,174.96 452.50,174.90 450.50,174.84 448.50,174.79 446.50,174.74 444.50,174.70 442.50,174.66 440.50,174.63 438.50,174.60 436.50,174.57 434.50,174.55 432.50,174.53 430.50,174.52 428.50,174.51 426.50,174.50 424.50,174.50 422.50,174.50 420.50,174.51 418.50,174.53 416.50,174.54 414.50,174.57 412.50,174.59 410.50,174.63 408.50,174.66 406.50,174.70 404.50,174.75 402.50,174.80 400.50,174.86 398.50,174.92 396.50,174.99 394.50,175.06 392.50,175.13 390.50,175.21 388.50,175.30 386.50,175.39 384.50,175.48 382.50,175.58 380.50,175.68 378.50,175.79 376.50,175.91 374.50,176.03 372.50,176.15 370.50,176.28 368.50,176.41 366.50,176.55 364.50,176.69 362.50,176.84 360.50,176.99 358.50,177.14 356.50,177.31 354.50,177.47 352.50,177.64 350.50,177.82 348.50,178.00 346.50,178.19 344.50,178.38 342.50,178.57 340.50,178.77 338.50,178.97 336.50,179.18 334.50,179.40 332.50,179.62 330.50,179.84 328.50,180.07 326.50,180.30 324.50,180.54 322.50,180.78 320.50,181.03 318.50,181.28 316.50,181.54 314.50,181.80 312.50,182.07 310.50,182.34 308.50,182.62 306.50,182.90 304.50,183.18 302.50,183.47 300.50,183.77 298.50,184.07 296.50,184.37 294.50,184.68 292.50,185.00 290.50,185.32 288.50,185.64 286.50,185.97 284.50,186.30 282.50,186.64 280.50,186.99 278.50,187.33 276.50,187.69 274.50,188.04 272.50,188.41 270.50,188.77 268.50,189.15 266.50,189.52 264.50,189.90 262.50,190.29 260.50,190.68 258.50,191.08 256.50,191.48 254.50,191.88 252.50,192.29 250.50,192.71 248.50,193.13 246.50,193.55 244.50,193.98 242.50,194.42 240.50,194.86 238.50,195.30 236.50,195.75 234.50,196.20 232.50,196.66 230.50,197.12 228.50,197.59 226.50,198.06 224.50,198.54 222.50,199.02 220.50,199.51 218.50,200.00 216.50,200.50 214.50,201.00 212.50,201.50 210.50,202.01 208.50,202.53 206.50,203.05 204.50,203.57 202.50,204.10 200.50,204.64 198.50,205.18 196.50,205.72 194.50,206.27 192.50,206.83 190.50,207.38 188.50,207.95 186.50,208.52 184.50,209.09 182.50,209.67 180.50,210.25 178.50,210.84 176.50,211.43 174.50,212.02 172.50,212.63 170.50,213.23 168.50,213.84 166.50,214.46 164.50,215.08 162.50,215.71 161.50,216.02" fill="#c9a5b0"/>
<polyline points="597.00,180.03 597.00,185.03" fill="none" stroke="#e8eef6" stroke-width="1"/>
<polyline points="621.50,184.77 621.50,189.77" fill="none" stroke="#e8eef6" stroke-width="1"/>
<polyline points="163.50,210.89 163.50,243.00" fill="none" stroke="#e8eef6" stroke-width="1"/>
<polyline points="191.60,196.58 191.60,296.50" fill="none" stroke="#e8eef6" stroke-width="1"/>
<polyline points="194.60,195.74 194.60,296.50" fill="none" stroke="#e8eef6" stroke-width="1"/>
<polyline points="198.40,194.71 198.40,296.50" fill="none" stroke="#e8eef6" stroke-width="1"/>
<polyline points="273.00,177.82 273.00,298.00" fill="none" stroke="#e8eef6" stroke-width="1"/>
<polyline points="420.00,164.01 420.00,298.50" fill="none" stroke="#e8eef6" stroke-width="1"/>
<polyline points="493.50,166.46 493.50,296.50" fill="none" stroke="#e8eef6" stroke-width="1"/>
<polyline points="496.50,166.68 496.50,296.50" fill="none" stroke="#e8eef6" stroke-width="1"/>
<polyline points="500.00,166.95 500.00,296.50" fill="none" stroke="#e8eef6" stroke-width="1"/>
<polyline points="528.50,169.62 528.50,215.00 527.50,240.00 527.00,245.00" fill="none" stroke="#e8eef6" stroke-width="1"/>
<polyline points="347.00,276.00 347.00,298.50" fill="none" stroke="#e8eef6" stroke-width="1"/>
<polyline points="163.00,228.00 199.00,228.60 273.00,218.80 400.00,212.40 494.00,214.30 528.50,209.50 548.50,208.20" fill="none" stroke="#e8eef6" stroke-width="1"/>
<polyline points="163.00,244.00 192.00,255.00 199.00,254.50 273.00,252.60 494.00,252.80 501.00,254.40 528.50,244.00 548.50,239.50" fill="none" stroke="#e8eef6" stroke-width="1"/>
<polyline points="168.00,251.00 192.00,258.50 199.00,257.50 273.00,255.80 494.00,255.80 501.00,257.80 528.50,247.50 548.50,243.00" fill="none" stroke="#e8eef6" stroke-width="1"/>
<polyline points="178.00,260.00 192.00,264.60 500.00,265.00 517.40,258.60" fill="none" stroke="#e8eef6" stroke-width="1"/>
<polyline points="181.00,276.30 512.00,276.30" fill="none" stroke="#e8eef6" stroke-width="1"/>
<polyline points="178.00,291.00 192.00,288.40 500.00,288.40 517.40,294.20" fill="none" stroke="#e8eef6" stroke-width="1"/>
<defs><clipPath id="lw"><polygon points="180.70,283.10 175.27,296.22 165.22,306.27 152.10,311.70 137.90,311.70 124.78,306.27 114.73,296.22 109.30,283.10 109.30,268.90 114.73,255.78 124.78,245.73 137.90,240.30 152.10,240.30 165.22,245.73 175.27,255.78 180.70,268.90"/></clipPath></defs>
<g clip-path="url(#lw)">
<circle cx="145" cy="276" r="37" fill="#de9ca4"/>
<circle cx="145" cy="276" r="8.50" fill="none" stroke="#bc5c68" stroke-width="0.8"/>
<circle cx="145" cy="276" r="11.40" fill="none" stroke="#bc5c68" stroke-width="0.8"/>
<circle cx="145" cy="276" r="14.30" fill="none" stroke="#bc5c68" stroke-width="0.8"/>
<circle cx="145" cy="276" r="17.20" fill="none" stroke="#bc5c68" stroke-width="0.8"/>
<circle cx="145" cy="276" r="20.10" fill="none" stroke="#bc5c68" stroke-width="0.8"/>
<circle cx="145" cy="276" r="23.00" fill="none" stroke="#bc5c68" stroke-width="0.8"/>
<circle cx="145" cy="276" r="25.90" fill="none" stroke="#bc5c68" stroke-width="0.8"/>
<circle cx="145" cy="276" r="28.80" fill="none" stroke="#bc5c68" stroke-width="0.8"/>
<circle cx="145" cy="276" r="31.70" fill="none" stroke="#bc5c68" stroke-width="0.8"/>
<circle cx="145" cy="276" r="34.60" fill="none" stroke="#bc5c68" stroke-width="0.8"/>
<line x1="152.00" y1="276.00" x2="182.00" y2="276.00" stroke="#bc5c68" stroke-width="0.8"/>
<line x1="151.96" y1="276.73" x2="181.80" y2="279.87" stroke="#bc5c68" stroke-width="0.8"/>
<line x1="151.85" y1="277.46" x2="181.19" y2="283.69" stroke="#bc5c68" stroke-width="0.8"/>
<line x1="151.66" y1="278.16" x2="180.19" y2="287.43" stroke="#bc5c68" stroke-width="0.8"/>
<line x1="151.39" y1="278.85" x2="178.80" y2="291.05" stroke="#bc5c68" stroke-width="0.8"/>
<line x1="151.06" y1="279.50" x2="177.04" y2="294.50" stroke="#bc5c68" stroke-width="0.8"/>
<line x1="150.66" y1="280.11" x2="174.93" y2="297.75" stroke="#bc5c68" stroke-width="0.8"/>
<line x1="150.20" y1="280.68" x2="172.50" y2="300.76" stroke="#bc5c68" stroke-width="0.8"/>
<line x1="149.68" y1="281.20" x2="169.76" y2="303.50" stroke="#bc5c68" stroke-width="0.8"/>
<line x1="149.11" y1="281.66" x2="166.75" y2="305.93" stroke="#bc5c68" stroke-width="0.8"/>
<line x1="148.50" y1="282.06" x2="163.50" y2="308.04" stroke="#bc5c68" stroke-width="0.8"/>
<line x1="147.85" y1="282.39" x2="160.05" y2="309.80" stroke="#bc5c68" stroke-width="0.8"/>
<line x1="147.16" y1="282.66" x2="156.43" y2="311.19" stroke="#bc5c68" stroke-width="0.8"/>
<line x1="146.46" y1="282.85" x2="152.69" y2="312.19" stroke="#bc5c68" stroke-width="0.8"/>
<line x1="145.73" y1="282.96" x2="148.87" y2="312.80" stroke="#bc5c68" stroke-width="0.8"/>
<line x1="145.00" y1="283.00" x2="145.00" y2="313.00" stroke="#bc5c68" stroke-width="0.8"/>
<line x1="144.27" y1="282.96" x2="141.13" y2="312.80" stroke="#bc5c68" stroke-width="0.8"/>
<line x1="143.54" y1="282.85" x2="137.31" y2="312.19" stroke="#bc5c68" stroke-width="0.8"/>
<line x1="142.84" y1="282.66" x2="133.57" y2="311.19" stroke="#bc5c68" stroke-width="0.8"/>
<line x1="142.15" y1="282.39" x2="129.95" y2="309.80" stroke="#bc5c68" stroke-width="0.8"/>
<line x1="141.50" y1="282.06" x2="126.50" y2="308.04" stroke="#bc5c68" stroke-width="0.8"/>
<line x1="140.89" y1="281.66" x2="123.25" y2="305.93" stroke="#bc5c68" stroke-width="0.8"/>
<line x1="140.32" y1="281.20" x2="120.24" y2="303.50" stroke="#bc5c68" stroke-width="0.8"/>
<line x1="139.80" y1="280.68" x2="117.50" y2="300.76" stroke="#bc5c68" stroke-width="0.8"/>
<line x1="139.34" y1="280.11" x2="115.07" y2="297.75" stroke="#bc5c68" stroke-width="0.8"/>
<line x1="138.94" y1="279.50" x2="112.96" y2="294.50" stroke="#bc5c68" stroke-width="0.8"/>
<line x1="138.61" y1="278.85" x2="111.20" y2="291.05" stroke="#bc5c68" stroke-width="0.8"/>
<line x1="138.34" y1="278.16" x2="109.81" y2="287.43" stroke="#bc5c68" stroke-width="0.8"/>
<line x1="138.15" y1="277.46" x2="108.81" y2="283.69" stroke="#bc5c68" stroke-width="0.8"/>
<line x1="138.04" y1="276.73" x2="108.20" y2="279.87" stroke="#bc5c68" stroke-width="0.8"/>
<line x1="138.00" y1="276.00" x2="108.00" y2="276.00" stroke="#bc5c68" stroke-width="0.8"/>
<line x1="138.04" y1="275.27" x2="108.20" y2="272.13" stroke="#bc5c68" stroke-width="0.8"/>
<line x1="138.15" y1="274.54" x2="108.81" y2="268.31" stroke="#bc5c68" stroke-width="0.8"/>
<line x1="138.34" y1="273.84" x2="109.81" y2="264.57" stroke="#bc5c68" stroke-width="0.8"/>
<line x1="138.61" y1="273.15" x2="111.20" y2="260.95" stroke="#bc5c68" stroke-width="0.8"/>
<line x1="138.94" y1="272.50" x2="112.96" y2="257.50" stroke="#bc5c68" stroke-width="0.8"/>
<line x1="139.34" y1="271.89" x2="115.07" y2="254.25" stroke="#bc5c68" stroke-width="0.8"/>
<line x1="139.80" y1="271.32" x2="117.50" y2="251.24" stroke="#bc5c68" stroke-width="0.8"/>
<line x1="140.32" y1="270.80" x2="120.24" y2="248.50" stroke="#bc5c68" stroke-width="0.8"/>
<line x1="140.89" y1="270.34" x2="123.25" y2="246.07" stroke="#bc5c68" stroke-width="0.8"/>
<line x1="141.50" y1="269.94" x2="126.50" y2="243.96" stroke="#bc5c68" stroke-width="0.8"/>
<line x1="142.15" y1="269.61" x2="129.95" y2="242.20" stroke="#bc5c68" stroke-width="0.8"/>
<line x1="142.84" y1="269.34" x2="133.57" y2="240.81" stroke="#bc5c68" stroke-width="0.8"/>
<line x1="143.54" y1="269.15" x2="137.31" y2="239.81" stroke="#bc5c68" stroke-width="0.8"/>
<line x1="144.27" y1="269.04" x2="141.13" y2="239.20" stroke="#bc5c68" stroke-width="0.8"/>
<line x1="145.00" y1="269.00" x2="145.00" y2="239.00" stroke="#bc5c68" stroke-width="0.8"/>
<line x1="145.73" y1="269.04" x2="148.87" y2="239.20" stroke="#bc5c68" stroke-width="0.8"/>
<line x1="146.46" y1="269.15" x2="152.69" y2="239.81" stroke="#bc5c68" stroke-width="0.8"/>
<line x1="147.16" y1="269.34" x2="156.43" y2="240.81" stroke="#bc5c68" stroke-width="0.8"/>
<line x1="147.85" y1="269.61" x2="160.05" y2="242.20" stroke="#bc5c68" stroke-width="0.8"/>
<line x1="148.50" y1="269.94" x2="163.50" y2="243.96" stroke="#bc5c68" stroke-width="0.8"/>
<line x1="149.11" y1="270.34" x2="166.75" y2="246.07" stroke="#bc5c68" stroke-width="0.8"/>
<line x1="149.68" y1="270.80" x2="169.76" y2="248.50" stroke="#bc5c68" stroke-width="0.8"/>
<line x1="150.20" y1="271.32" x2="172.50" y2="251.24" stroke="#bc5c68" stroke-width="0.8"/>
<line x1="150.66" y1="271.89" x2="174.93" y2="254.25" stroke="#bc5c68" stroke-width="0.8"/>
<line x1="151.06" y1="272.50" x2="177.04" y2="257.50" stroke="#bc5c68" stroke-width="0.8"/>
<line x1="151.39" y1="273.15" x2="178.80" y2="260.95" stroke="#bc5c68" stroke-width="0.8"/>
<line x1="151.66" y1="273.84" x2="180.19" y2="264.57" stroke="#bc5c68" stroke-width="0.8"/>
<line x1="151.85" y1="274.54" x2="181.19" y2="268.31" stroke="#bc5c68" stroke-width="0.8"/>
<line x1="151.96" y1="275.27" x2="181.80" y2="272.13" stroke="#bc5c68" stroke-width="0.8"/>
<circle cx="145" cy="276" r="11.5" fill="none" stroke="#bc5c68" stroke-width="3" opacity="0.5"/>
</g>
<polygon points="180.11,282.98 174.77,295.89 164.89,305.77 151.98,311.11 138.02,311.11 125.11,305.77 115.23,295.89 109.89,282.98 109.89,269.02 115.23,256.11 125.11,246.23 138.02,240.89 151.98,240.89 164.89,246.23 174.77,256.11 180.11,269.02" fill="none" stroke="#e8eef6" stroke-width="1.8"/>
<polyline points="584.00,276.40 579.18,258.40 566.00,245.22 548.00,240.40 530.00,245.22 516.82,258.40 512.00,276.40 516.82,294.40 530.00,307.58 548.00,312.40 566.00,307.58 579.18,294.40 584.00,276.40" fill="none" stroke="#e8eef6" stroke-width="1"/>
<polyline points="556.00,276.40 584.00,276.40" fill="none" stroke="#e8eef6" stroke-width="1"/>
<polyline points="554.93,272.40 579.18,258.40" fill="none" stroke="#e8eef6" stroke-width="1"/>
<polyline points="552.00,269.47 566.00,245.22" fill="none" stroke="#e8eef6" stroke-width="1"/>
<polyline points="548.00,268.40 548.00,240.40" fill="none" stroke="#e8eef6" stroke-width="1"/>
<polyline points="544.00,269.47 530.00,245.22" fill="none" stroke="#e8eef6" stroke-width="1"/>
<polyline points="541.07,272.40 516.82,258.40" fill="none" stroke="#e8eef6" stroke-width="1"/>
<polyline points="540.00,276.40 512.00,276.40" fill="none" stroke="#e8eef6" stroke-width="1"/>
<polyline points="541.07,280.40 516.82,294.40" fill="none" stroke="#e8eef6" stroke-width="1"/>
<polyline points="544.00,283.33 530.00,307.58" fill="none" stroke="#e8eef6" stroke-width="1"/>
<polyline points="548.00,284.40 548.00,312.40" fill="none" stroke="#e8eef6" stroke-width="1"/>
<polyline points="552.00,283.33 566.00,307.58" fill="none" stroke="#e8eef6" stroke-width="1"/>
<polyline points="554.93,280.40 579.18,294.40" fill="none" stroke="#e8eef6" stroke-width="1"/>
<circle cx="548" cy="276.4" r="16.5" fill="none" stroke="#e8eef6" stroke-width="1"/>
<g shape-rendering="geometricPrecision"><circle cx="548.3" cy="276.59999999999997" r="8.2" fill="#3ee8f0"/>
<circle cx="548.3" cy="276.59999999999997" r="7.0" fill="none" stroke="#8ff4f4" stroke-width="0.9"/>
<circle cx="548.3" cy="276.59999999999997" r="5.7" fill="#353031" stroke="#1f4a4a" stroke-width="0.8"/></g>
<g shape-rendering="geometricPrecision"><circle cx="145.3" cy="276.2" r="8.2" fill="#3ee8f0"/>
<circle cx="145.3" cy="276.2" r="7.0" fill="none" stroke="#8ff4f4" stroke-width="0.9"/>
<circle cx="145.3" cy="276.2" r="5.7" fill="#353031" stroke="#1f4a4a" stroke-width="0.8"/></g>
<polyline points="548.50,180.01 548.50,239.00 566.50,244.00 580.00,257.50 585.00,276.00 580.00,294.50 566.50,308.00 548.00,313.00 529.50,308.00 497.00,296.40 420.00,298.60 340.00,299.00 193.70,296.40 167.00,304.70 165.72,307.01 152.28,312.58 137.72,312.58 124.28,307.01" fill="none" stroke="#3ee8f0" stroke-width="2"/>
<polyline points="124.28,244.99 137.72,239.42 152.28,239.42 165.72,244.99 161.80,243.80 161.80,212.43" fill="none" stroke="#3ee8f0" stroke-width="2"/>
</g>
<line x1="346.5" y1="186" x2="346.5" y2="276" stroke="#5a6470" stroke-width="1"/>
<line x1="347" y1="275.8" x2="433" y2="275.8" stroke="#a04050" stroke-width="1"/>
<text x="345" y="190" font-size="9" fill="#5a6470" font-family="Liberation Sans">y</text>
<text x="344" y="277" font-size="9" fill="#4a4a58" font-family="Liberation Sans">z</text>
<text x="433" y="277" font-size="9" fill="#704050" font-family="Liberation Sans">x</text>
<!-- viewcube -->
<path d="M626,68.8 A39.5,2.6 0 0 1 705.5,68.8" fill="none" stroke="#3a3a3a" stroke-width="1"/>
<ellipse cx="666" cy="70" rx="30" ry="2.6" fill="#151515"/>
<path d="M626,68.8 A39.5,2.6 0 0 0 705.5,68.8" fill="none" stroke="#7c7c7c" stroke-width="1.1"/>
<path d="M638,70 A28,2.6 0 0 0 694,70" fill="none" stroke="#8a8a8a" stroke-width="1"/>
<rect x="652" y="37" width="31.5" height="31" fill="#969696"/>
<rect x="653.5" y="38.5" width="28.5" height="28" fill="#8b8b8b"/>
<text x="667.7" y="55.6" font-size="8" font-weight="bold" fill="#5c5c5c" text-anchor="middle" font-family="Liberation Sans" transform="translate(667.7 0) scale(0.82 1) translate(-667.7 0)">FRONT</text>
<!-- gizmo -->
<line x1="27.5" y1="436" x2="27.5" y2="459" stroke="#2a2aa0" stroke-width="1.4"/>
<line x1="28" y1="458.6" x2="54" y2="458.6" stroke="#b02424" stroke-width="1.4"/>
<text x="26" y="434" font-size="9" fill="#2a2aa8" font-family="Liberation Sans">z</text>
<text x="52" y="459.5" font-size="9" fill="#b02828" font-family="Liberation Sans">x</text>
<text x="27.5" y="460" font-size="9" fill="#20a020" font-family="Liberation Sans">y</text>
<g shape-rendering="crispEdges">
<rect x="0" y="0" width="2" height="487" fill="#826e38"/>
<rect x="722" y="0" width="2" height="487" fill="#84723c"/>
<rect x="2" y="484" width="720" height="1" fill="#4a4242"/>
<rect x="0" y="485" width="724" height="2" fill="#7a7150"/>
</g>
</svg>
<div class="t" style="left:5.5px">[</div>
<div class="t" style="left:11px">+</div>
<div class="t" style="left:20.7px">]</div>
<div class="t" style="left:27.5px">[</div>
<div class="t" style="left:32px">Front</div>
<div class="t" style="left:60.3px">]</div>
<div class="t" style="left:67.8px">[</div>
<div class="t" style="left:73.2px">Standard</div>
<div class="t" style="left:119.4px">]</div>
<div class="t" style="left:127.1px">[</div>
<div class="t" style="left:131.7px;letter-spacing:-0.35px">Edged Faces</div>
<div class="t" style="left:194.4px">]</div>
</body></html>
